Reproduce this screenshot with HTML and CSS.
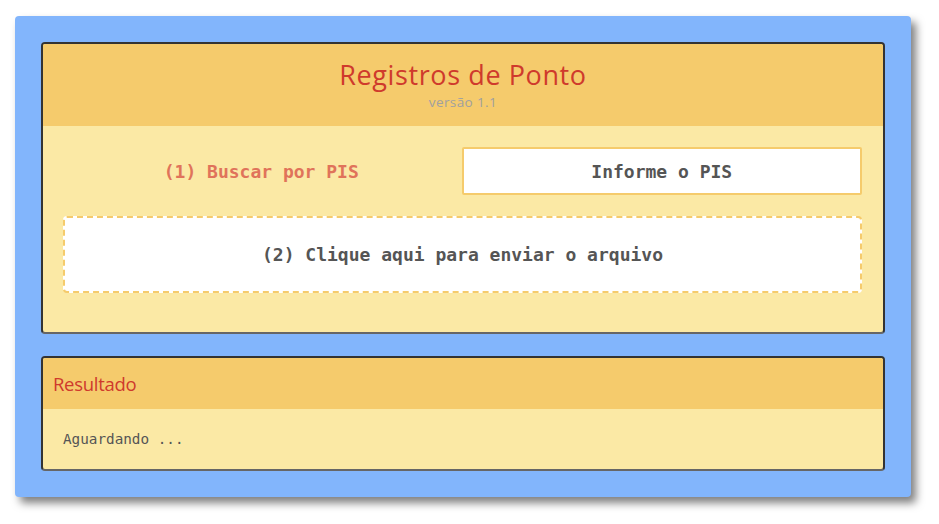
FILE: index.html
```html
<!DOCTYPE html>
<html lang="pt">
<head>
<meta charset="utf-8">
<title>Registros de Ponto</title>
<link rel="stylesheet" href="styles.css">
</head>
<body>
<main class="app">
  <section class="panel">
    <header class="panel-head center">
      <h1 class="title">Registros de Ponto</h1>
      <div class="version">versão 1.1</div>
    </header>
    <div class="panel-body main-body">
      <div class="search-row">
        <div class="search-label">(1) Buscar por PIS</div>
        <input class="pis-input" type="text" placeholder="Informe o PIS">
      </div>
      <div class="dropzone">(2) Clique aqui para enviar o arquivo</div>
    </div>
  </section>
  <section class="panel">
    <header class="panel-head result-head">
      <h2 class="result-title">Resultado</h2>
    </header>
    <div class="panel-body result-body">Aguardando ...</div>
  </section>
</main>
</body>
</html>
```
FILE: styles.css
```css
* { box-sizing: border-box; }
html, body { margin: 0; padding: 0; background: #fff; }
body { padding: 16px 28px 27px 15px; font-family: "Open Sans", sans-serif; }

.app {
  background: #82b5fc;
  border-radius: 4px;
  box-shadow: 5px 6px 8px rgba(0,0,0,0.5);
  padding: 26px;
  display: flex;
  flex-direction: column;
  gap: 22px;
  height: 481px;
}

.panel {
  flex-shrink: 0;
  border: 2px solid #333;
  border-radius: 4px;
  overflow: hidden;
  background: #fbe9a5;
  border-bottom-color: #666;
}

.panel-head { background: #f5cb6c; }
.center { text-align: center; height: 82px; padding-top: 12px; }

.title {
  margin: 0;
  font-family: "Open Sans", sans-serif;
  font-weight: 400;
  font-size: 27px;
  line-height: normal;
  color: #cf3a2c;
  letter-spacing: 0.6px;
}
.version {
  font-size: 13.5px;
  line-height: normal;
  color: #a0a0a0;
  letter-spacing: 0.4px;
}

.main-body { padding: 21px 21px 39px 20px; }

.search-row { display: flex; align-items: center; }
.search-label {
  flex: 1;
  text-align: center;
  font-family: "DejaVu Sans Mono", monospace;
  font-weight: bold;
  font-size: 18px;
  color: #e0735a;
}
.pis-input {
  flex: 1;
  height: 48px;
  border: 2px solid #f5cb6c;
  border-radius: 2px;
  background: #fff;
  text-align: center;
  font-family: "DejaVu Sans Mono", monospace;
  font-weight: bold;
  font-size: 18px;
  color: #555;
  outline: none;
  padding: 0;
  margin-left: 2px;
}
.pis-input::placeholder { color: #555; opacity: 1; }

.dropzone {
  margin-top: 21px;
  height: 77px;
  border: 2px dashed #f5cb6c;
  border-radius: 4px;
  background: #fff;
  display: flex;
  align-items: center;
  justify-content: center;
  font-family: "DejaVu Sans Mono", monospace;
  font-weight: bold;
  font-size: 18px;
  color: #555;
}

.result-head { height: 51px; display: flex; align-items: center; padding-left: 10px; }
.result-title {
  margin: 0;
  font-family: "Open Sans", sans-serif;
  font-weight: 400;
  font-size: 18.5px;
  color: #cf3a2c;
  letter-spacing: -0.3px;
}
.result-body {
  height: 60px;
  padding: 22px 20px 0;
  font-family: "DejaVu Sans Mono", monospace;
  font-size: 14.3px;
  line-height: 17px;
  color: #555;
}
```
